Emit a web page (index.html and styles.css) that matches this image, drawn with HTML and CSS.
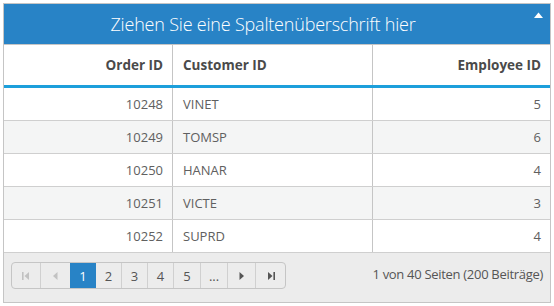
FILE: index.html
```html
<!DOCTYPE html>
<html lang="de">
<head>
<meta charset="utf-8">
<link rel="stylesheet" href="styles.css">
</head>
<body>
<div class="grid">
  <div class="group-header">
    <span class="group-title">Ziehen Sie eine Spaltenüberschrift hier</span>
    <svg class="caret" width="9" height="6" viewBox="0 0 9 6"><path d="M0 6 L4.5 0.5 L9 6 Z" fill="#fff"/></svg>
  </div>
  <div class="row head">
    <div class="cell num">Order ID</div>
    <div class="cell">Customer ID</div>
    <div class="cell num">Employee ID</div>
  </div>
  <div class="row">
    <div class="cell num">10248</div><div class="cell">VINET</div><div class="cell num">5</div>
  </div>
  <div class="row alt">
    <div class="cell num">10249</div><div class="cell">TOMSP</div><div class="cell num">6</div>
  </div>
  <div class="row">
    <div class="cell num">10250</div><div class="cell">HANAR</div><div class="cell num">4</div>
  </div>
  <div class="row alt">
    <div class="cell num">10251</div><div class="cell">VICTE</div><div class="cell num">3</div>
  </div>
  <div class="row">
    <div class="cell num">10252</div><div class="cell">SUPRD</div><div class="cell num">4</div>
  </div>
  <div class="pager">
    <div class="pages">
      <span class="pbtn w28 disabled"><svg width="8" height="8" viewBox="0 0 8 8"><rect x="0" y="0" width="1.6" height="8" fill="currentColor"/><path d="M7 0 L2.5 4 L7 8 Z" fill="currentColor"/></svg></span>
      <span class="pbtn w30 disabled"><svg width="5" height="8" viewBox="0 0 5 8"><path d="M4.5 0 L0 4 L4.5 8 Z" fill="currentColor"/></svg></span>
      <span class="pbtn w25 active">1</span>
      <span class="pbtn w26">2</span>
      <span class="pbtn w26">3</span>
      <span class="pbtn w26">4</span>
      <span class="pbtn w27">5</span>
      <span class="pbtn w27">...</span>
      <span class="pbtn w28"><svg width="5" height="8" viewBox="0 0 5 8"><path d="M0.5 0 L5 4 L0.5 8 Z" fill="currentColor"/></svg></span>
      <span class="pbtn w30 last"><svg width="8" height="8" viewBox="0 0 8 8"><path d="M1 0 L5.5 4 L1 8 Z" fill="currentColor"/><rect x="6.4" y="0" width="1.6" height="8" fill="currentColor"/></svg></span>
    </div>
    <div class="info">1 von 40 Seiten (200 Beiträge)</div>
  </div>
</div>
</body>
</html>
```
FILE: styles.css
```css
html, body {
  margin: 0;
  padding: 0;
  background: #fff;
}
body {
  font-family: "Open Sans", "Noto Sans", sans-serif;
}
.grid {
  margin: 3px;
  width: 546px;
  border: 1px solid #c5c5c5;
}
.group-header {
  height: 40px;
  background: #2883c6;
  border-bottom: 1px solid #c5c5c5;
  display: flex;
  align-items: center;
  justify-content: center;
  position: relative;
}
.group-title {
  color: #fff;
  font-size: 18px;
  font-weight: 300;
  margin-right: 28px;
  letter-spacing: -0.2px;
}
.caret {
  position: absolute;
  right: 7px;
  top: 8px;
}
.row {
  display: grid;
  grid-template-columns: 168px 200px 178px;
  height: 32px;
  border-bottom: 1px solid #cfcfcf;
  color: #606060;
  font-size: 13px;
}
.row.alt {
  background: #f4f5f5;
}
.row.head {
  height: 40px;
  border-bottom: 3px solid #1c9fdb;
  font-weight: 700;
  color: #4a4a4a;
  font-size: 13.5px;
}
.cell {
  display: flex;
  align-items: center;
  padding: 0 9px 0 10px;
  border-left: 1px solid #c5c5c5;
}
.cell:first-child {
  border-left: none;
}
.cell.num {
  justify-content: flex-end;
}
.pager {
  height: 49px;
  background: #ececec;
  display: flex;
  align-items: flex-start;
  justify-content: space-between;
  padding: 9px 7px 0 7px;
  box-sizing: border-box;
}
.pages {
  display: flex;
  height: 27px;
  border: 1px solid #c5c5c5;
  border-radius: 4px;
  box-sizing: border-box;
  overflow: hidden;
}
.pbtn {
  display: flex;
  align-items: center;
  justify-content: center;
  border-left: 1px solid #d0d0d0;
  color: #555;
  font-size: 13px;
  box-sizing: border-box;
}
.pbtn:first-child {
  border-left: none;
}
.pbtn.disabled {
  color: #c2c2c2;
}
.pbtn.active {
  background: #2883c6;
  color: #fff;
  border-left-color: #2883c6;
}
.pbtn.active + .pbtn {
  border-left-color: #2883c6;
}
.w25 { width: 25px; }
.w26 { width: 26px; }
.w27 { width: 27px; }
.w28 { width: 28px; }
.w30 { width: 30px; }
.info {
  font-size: 13px;
  color: #555;
  margin-top: 3px;
  letter-spacing: -0.3px;
}
```
